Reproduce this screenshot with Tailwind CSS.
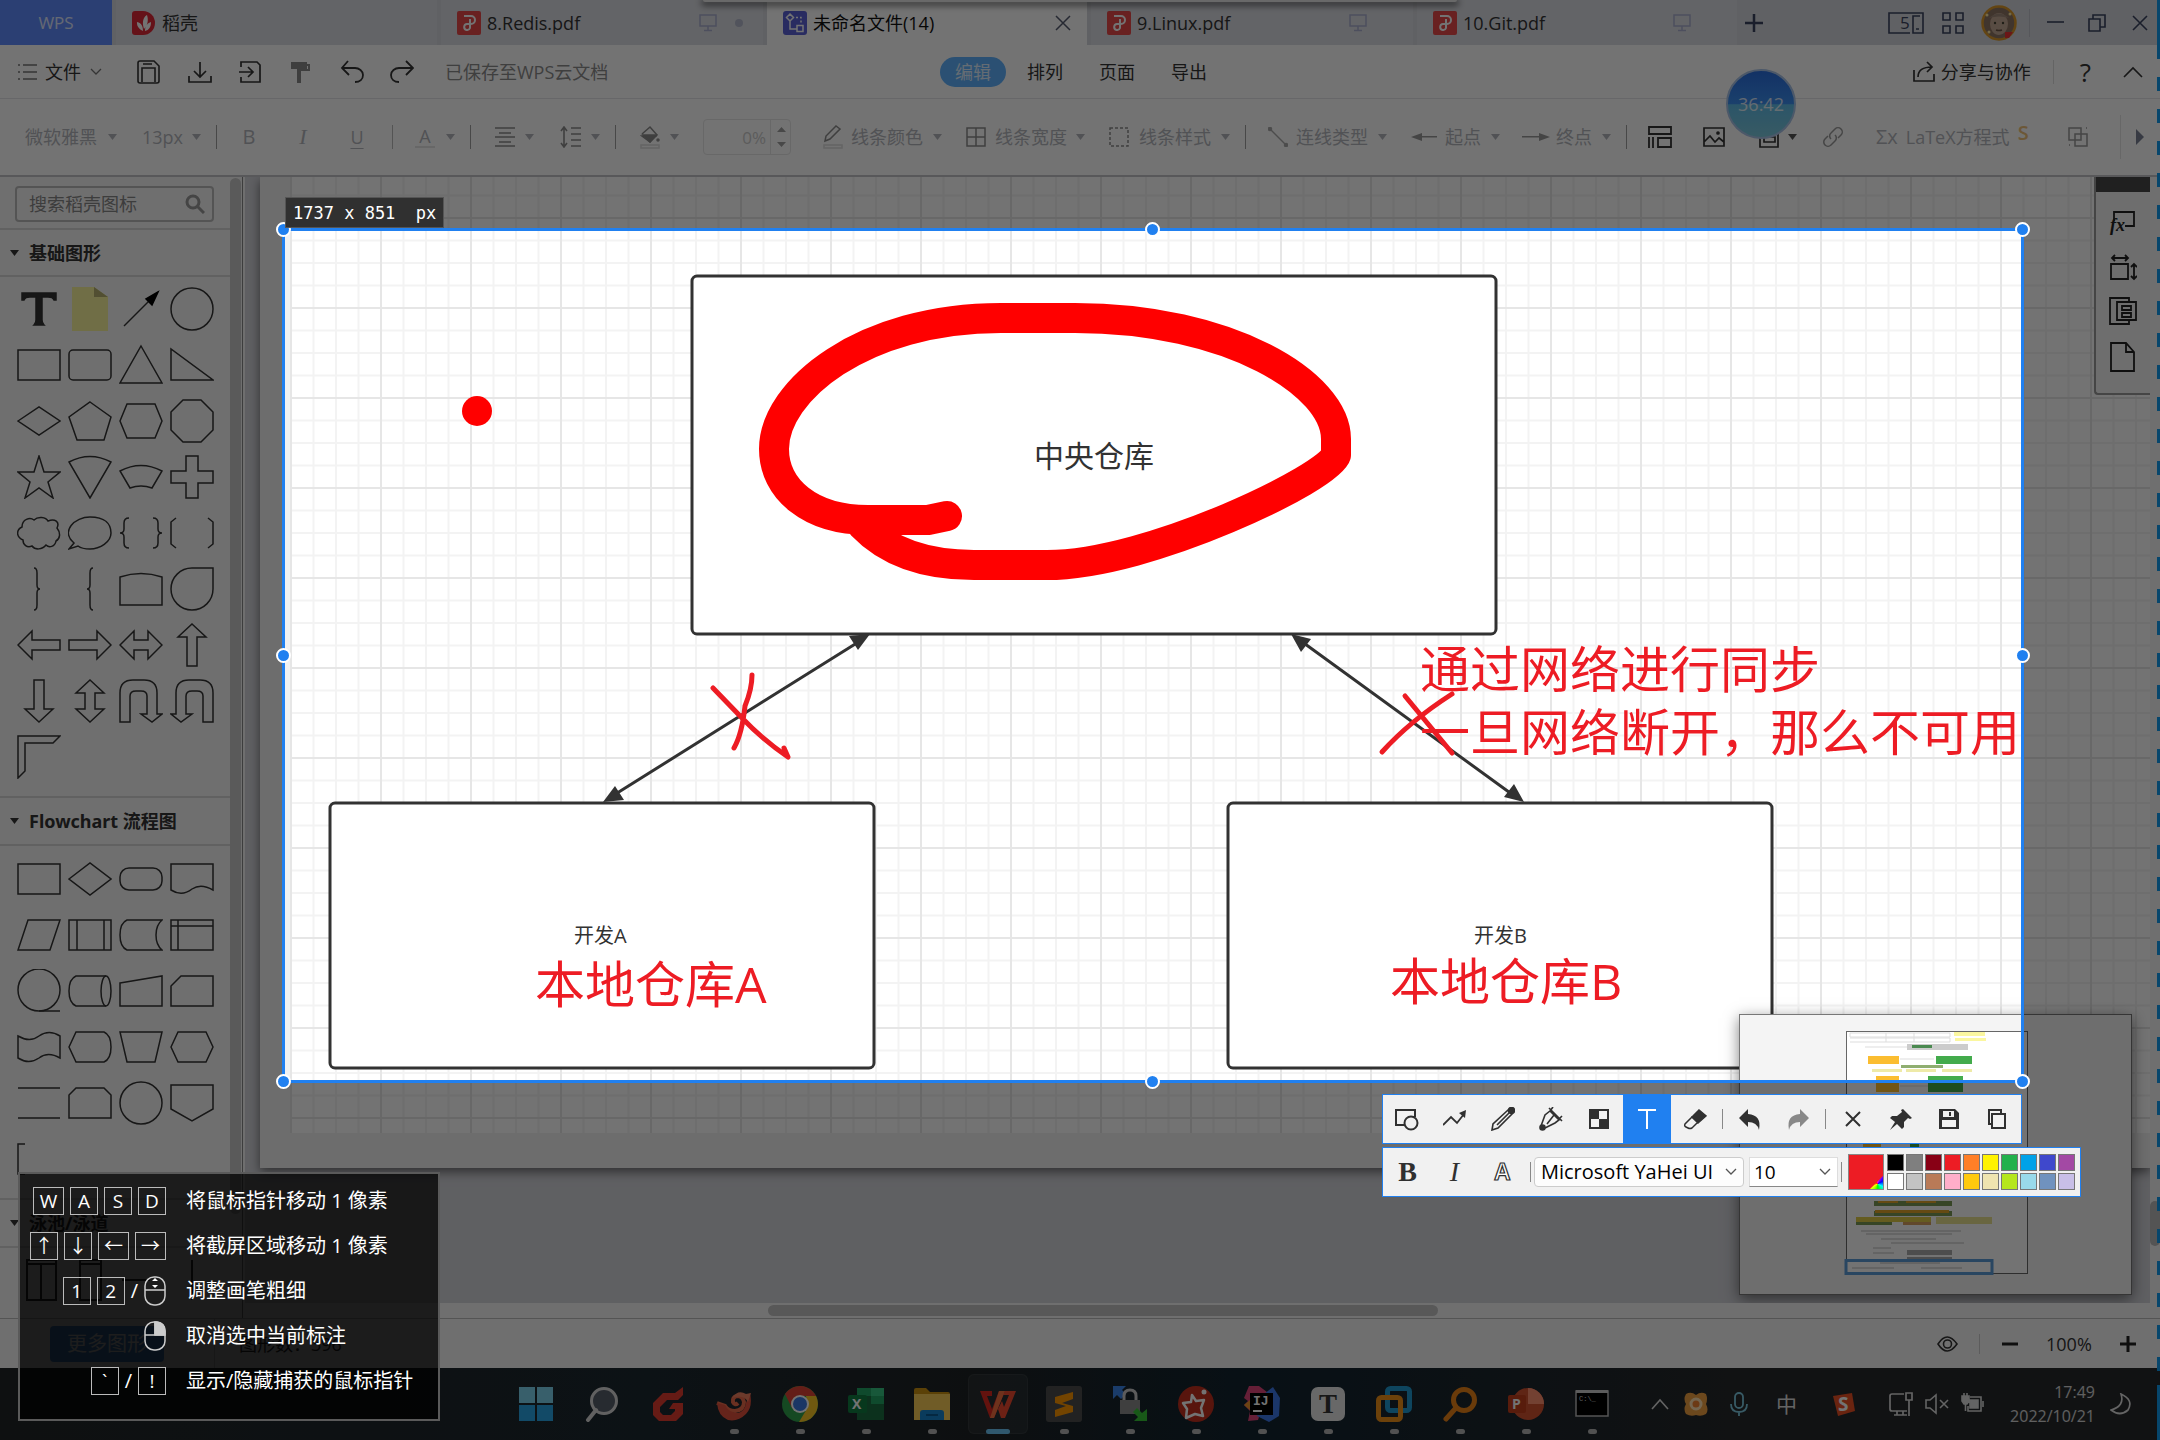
<!DOCTYPE html>
<html lang="zh-CN">
<head>
<meta charset="utf-8">
<meta name="viewport" content="width=device-width, initial-scale=1">
<title>未命名文件(14)</title>
<script src="https://cdn.jsdelivr.net/npm/@tailwindcss/browser@4"></script>
</head>
<body class="relative flex h-screen min-h-[900px] w-full flex-col overflow-hidden bg-white font-['Open_Sans','Noto_Sans_CJK_SC',sans-serif] text-[18px] leading-6 text-[#333]">

<!-- shared icons -->
<svg class="hidden" aria-hidden="true">
  <symbol id="caret" viewBox="0 0 9 6"><path d="M0 0h9L4.5 6z" fill="currentColor"/></symbol>
  <symbol id="pdf" viewBox="0 0 24 24"><rect width="24" height="24" rx="2" fill="#e84b4b"/><path d="M7 5h7a4 4 0 0 1 0 8h-4a3 3 0 1 0 3 4V8" fill="none" stroke="#fff" stroke-width="2"/></symbol>
  <symbol id="screen" viewBox="0 0 18 18"><path d="M1 1h16v11H1zM9 12v4M5 16.500h8" fill="none" stroke="#aab0d0" stroke-width="1.500"/></symbol>
  <symbol id="chev" viewBox="0 0 12 8"><path d="M1 1l5 5 5-5" fill="none" stroke="currentColor" stroke-width="1.300"/></symbol>
</svg>

<!-- tab strip -->
<header class="flex h-[45px] shrink-0 items-stretch bg-[#d6d7dd]">
  <button class="w-[112px] bg-[#5f8cff] text-center text-[17px] text-white/80">WPS</button>
  <nav class="flex gap-1 pl-1">
    <a href="#" class="flex w-[321px] items-center bg-[#dcdee4] pl-4">
      <svg class="mr-[6px] size-6" viewBox="0 0 24 24"><path d="M0 3a3 3 0 0 1 3-3h8a12 12 0 0 1 0 24H3a3 3 0 0 1-3-3z" fill="#e02838"/><path d="M11 20C4 17 5 11 5 11c5 1 6 5 6 9zM12 18C9 9 13 5 15 4c2 6 0 11-3 14zM13 20c0-6 3-8 6-9 0 5-2 8-6 9z" fill="#fff"/></svg>稻壳</a>
    <a href="#" class="flex w-[322px] items-center bg-[#dcdee4] pl-4">
      <svg class="mr-[6px] size-6"><use href="#pdf"/></svg>8.Redis.pdf
      <svg class="ml-auto mr-[18px] size-[18px]"><use href="#screen"/></svg><i class="mr-[20px] size-2 rounded-full bg-[#b4b8cc]"></i></a>
    <a href="#" class="flex w-[320px] items-center bg-white pl-4 text-[#111]">
      <svg class="mr-[6px] size-6" viewBox="0 0 24 24"><rect width="24" height="24" rx="3" fill="#5b62d8"/><g fill="none" stroke="#fff" stroke-width="1.500"><path d="M7 3l3.500 3.500L7 10 3.500 6.500zM7 10v8h7M14 14.500h6v6h-6z"/><path d="M13 6.500h5v7" stroke-dasharray="2 2"/></g></svg>未命名文件(14)
      <svg class="ml-auto mr-4 size-4" viewBox="0 0 16 16"><path d="M1 1l14 14M15 1L1 15" stroke="#555b70" stroke-width="1.500"/></svg></a>
    <a href="#" class="flex w-[322px] items-center bg-[#dcdee4] pl-4">
      <svg class="mr-[6px] size-6"><use href="#pdf"/></svg>9.Linux.pdf
      <svg class="ml-auto mr-[46px] size-[18px]"><use href="#screen"/></svg></a>
    <a href="#" class="flex w-[320px] items-center bg-[#dcdee4] pl-4">
      <svg class="mr-[6px] size-6"><use href="#pdf"/></svg>10.Git.pdf
      <svg class="ml-auto mr-[46px] size-[18px]"><use href="#screen"/></svg></a>
  </nav>
  <button class="w-9 pl-[7px]" aria-label="新建"><svg class="size-5" viewBox="0 0 20 20"><path d="M10 1v18M1 10h18" stroke="#3a4460" stroke-width="2.500"/></svg></button>
  <div class="ml-auto flex items-center pr-[12px] text-[#3a4460]">
    <svg class="h-[22px] w-9" viewBox="0 0 36 22" fill="none" stroke="currentColor" stroke-width="1.600"><path d="M22 21H1V1h34v20H25V4h7M31 17h-3"/><text x="12" y="17" font-size="17" fill="currentColor" stroke="none">5</text></svg>
    <svg class="ml-[18px] size-[22px]" viewBox="0 0 22 22" fill="none" stroke="currentColor" stroke-width="1.600"><path d="M1 1h7v7H1zM14 1h7v7h-7zM1 14h7v7H1zM14 14h7v7h-7z"/></svg>
    <svg class="ml-[17px] size-9" viewBox="0 0 36 36"><circle cx="18" cy="18" r="16.500" fill="#8f7564" stroke="#dc9a2c" stroke-width="2.500"/><ellipse cx="18" cy="19" rx="9" ry="11" fill="#c4a894"/><path d="M8 13q10-9 20 0-10-3-20 0" fill="#a08a7a"/><path d="M15 25q3 1 6 0" stroke="#6b5546" stroke-width="1.500" fill="none"/><circle cx="14" cy="18" r="1.200" fill="#443"/><circle cx="22" cy="18" r="1.200" fill="#443"/><g fill="#ffe9a0"><circle cx="6" cy="10" r="1.500"/><circle cx="8" cy="27" r="1.500"/><circle cx="29" cy="9" r="1.500"/></g><path d="M24 27h8l-4 6h-4z" fill="#e33"/></svg>
    <i class="ml-3 h-7 w-px bg-[#bfc1c9]"></i>
    <svg class="ml-[17px] size-[17px]" viewBox="0 0 17 17"><path d="M0 8h17" stroke="currentColor" stroke-width="1.600"/></svg>
    <svg class="ml-6 size-[18px]" viewBox="0 0 18 18" fill="none" stroke="currentColor" stroke-width="1.600"><path d="M1 5h11v12H1zM5 5V1h12v12h-5"/></svg>
    <svg class="ml-[26px] size-4" viewBox="0 0 16 16"><path d="M1 1l14 14M15 1L1 15" stroke="currentColor" stroke-width="1.600"/></svg>
  </div>
</header>

<!-- menu bar -->
<div class="flex h-[54px] shrink-0 items-center border-b border-[#e4e4e8] pl-[18px] pr-[17px]">
  <div class="flex flex-1 items-center">
    <button class="flex items-center gap-2"><svg class="h-4 w-[19px]" viewBox="0 0 19 16"><path d="M0 1h2M5 1h14M0 8h2M5 8h14M0 15h2M5 15h14" stroke="#777" stroke-width="1.500"/></svg>文件<svg class="h-2 w-[14px] text-[#777]"><use href="#chev"/></svg></button>
    <svg class="ml-[33px] size-6" viewBox="0 0 24 24" fill="none" stroke="currentColor" stroke-width="1.600"><path d="M2 3a2 2 0 0 1 2-2h14l5 5v15a2 2 0 0 1-2 2H4a2 2 0 0 1-2-2zM6 22V8h13v14M7 4h9"/></svg>
    <svg class="ml-[28px] size-6" viewBox="0 0 24 24" fill="none" stroke="currentColor" stroke-width="1.700"><path d="M12 2v14M6 11l6 6 6-6M1 16v6h22v-6"/></svg>
    <svg class="ml-[26px] size-6" viewBox="0 0 24 24" fill="none" stroke="currentColor" stroke-width="1.700"><path d="M3 7V2h16l3 3v17H3v-5M1 12h14M10 7l5 5-5 5"/></svg>
    <svg class="ml-[27px] size-6" viewBox="0 0 24 24" fill="#8a8a8a"><path d="M2 2h16v7H2zM18 4h3v7h-9v12H8V9h11V6h-1z"/></svg>
    <svg class="ml-[27px] size-6" viewBox="0 0 24 24" fill="none" stroke="currentColor" stroke-width="1.800"><path d="M8 1L2 8l7 7M2 8h13c4 0 8 3 8 7s-3 7-8 7"/></svg>
    <svg class="ml-[26px] size-6" viewBox="0 0 24 24" fill="none" stroke="currentColor" stroke-width="1.800"><path d="M16 1l7 7-7 7M22 8H9c-4 0-8 3-8 7s3 7 8 7"/></svg>
    <span class="ml-[31px] text-[#8c8c8c]">已保存至WPS云文档</span>
  </div>
  <nav class="flex items-center pr-[14px]">
    <button class="h-[30px] rounded-full bg-[#5fb2ff] px-[15px] text-white/80">编辑</button>
    <button class="ml-[21px]">排列</button><button class="ml-9">页面</button><button class="ml-9">导出</button>
  </nav>
  <div class="flex flex-1 items-center justify-end">
    <button class="flex items-center gap-[6px]"><svg class="size-[22px]" viewBox="0 0 22 22" fill="none" stroke="currentColor" stroke-width="1.700"><path d="M1 9v11h20v-7M5 16C5 9 10 6 19 6M14 1l5 5-5 5"/></svg>分享与协作</button>
    <i class="ml-[22px] h-6 w-px bg-[#ddd]"></i>
    <button class="ml-[26px] text-[26px]">?</button>
    <svg class="ml-[32px] h-3 w-5" viewBox="0 0 20 12"><path d="M1 11l9-9 9 9" fill="none" stroke="currentColor" stroke-width="1.600"/></svg>
  </div>
</div>

<!-- format bar -->
<div class="flex h-[78px] shrink-0 items-center border-b-2 border-[#c4c4c8] pl-[25px] text-[#b4b6bc]">
  <button class="flex items-center gap-[11px]">微软雅黑<svg class="h-[6px] w-[9px]"><use href="#caret"/></svg></button>
  <button class="ml-6 flex items-center gap-2"><span class="w-[43px]">13px</span><svg class="h-[6px] w-[9px]"><use href="#caret"/></svg></button>
  <i class="ml-[15px] h-6 w-px bg-[#a0a0a0]"></i>
  <button class="ml-6 w-4 text-[20px]">B</button>
  <button class="ml-10 w-3 font-['Liberation_Serif'] text-[22px] italic">I</button>
  <button class="ml-10 w-4 text-[18px] underline underline-offset-4">U</button>
  <i class="ml-[27px] h-6 w-px bg-[#bbb]"></i>
  <button class="ml-[22px] flex items-center gap-[11px]"><span class="w-5 border-b-2 border-[#e4e4e4] text-center leading-5">A</span><svg class="h-[6px] w-[9px]"><use href="#caret"/></svg></button>
  <i class="ml-[15px] h-6 w-px bg-[#a0a0a0]"></i>
  <button class="ml-6 flex items-center gap-[10px]"><svg class="size-5" viewBox="0 0 20 20" stroke="#8c8c8c" stroke-width="1.600"><path d="M0 1h20M4 6h12M0 10h20M4 15h12M0 19h20"/></svg><svg class="h-[6px] w-[9px]"><use href="#caret"/></svg></button>
  <button class="ml-[26px] flex items-center gap-[9px]"><svg class="size-[22px]" viewBox="0 0 22 22" stroke="#8c8c8c" stroke-width="1.600" fill="none"><path d="M4 1v20M1 5l3-4 3 4M1 17l3 4 3-4M11 2h10M11 8h10M11 14h10M11 20h10"/></svg><svg class="h-[6px] w-[9px]"><use href="#caret"/></svg></button>
  <i class="ml-[15px] h-6 w-px bg-[#a0a0a0]"></i>
  <button class="ml-6 flex items-center gap-[10px]"><svg class="h-6 w-5" viewBox="0 0 20 24" stroke="#8c8c8c" stroke-width="1.500" fill="none"><path d="M2 9l8-7 7 8-7 7-8-6h15"/><path d="M3 10h13l-6 7z" fill="#8c8c8c"/><circle cx="18" cy="15" r="1" /><path d="M1 20h18v3H1z" stroke="#ddd"/></svg><svg class="h-[6px] w-[9px]"><use href="#caret"/></svg></button>
  <label class="ml-6 flex h-9 w-[88px] items-center rounded-sm border border-[#e6e6e6]"><input aria-label="透明度" value="0%" class="h-full w-[67px] border-r border-[#e6e6e6] pr-1 text-right text-[17px] text-[#ccc]"><svg class="ml-[6px] h-6 w-[9px]" viewBox="0 0 9 24" fill="#a0a0a0"><path d="M0 7l4.500-5L9 7zM0 17h9l-4.500 5z"/></svg></label>
  <button class="ml-8 flex items-center gap-2"><svg class="h-6 w-5" viewBox="0 0 20 24" fill="none" stroke="#8c8c8c" stroke-width="1.500"><path d="M2 16l1-5L13 1l4 3L7 14z"/><path d="M1 20h18v3H1z" stroke="#ddd"/></svg>线条颜色<svg class="ml-[2px] h-[6px] w-[9px]"><use href="#caret"/></svg></button>
  <button class="ml-6 flex items-center gap-[9px]"><svg class="size-5" viewBox="0 0 20 20" fill="none" stroke="#8c8c8c" stroke-width="1.500"><path d="M1 1h18v18H1zM10 1v18M1 10h18"/></svg>线条宽度<svg class="h-[6px] w-[9px]"><use href="#caret"/></svg></button>
  <button class="ml-6 flex items-center gap-[10px]"><svg class="size-5" viewBox="0 0 20 20" fill="none" stroke="#8c8c8c" stroke-width="1.500" stroke-dasharray="3 2"><path d="M1 1h18v18H1z"/></svg>线条样式<svg class="h-[6px] w-[9px]"><use href="#caret"/></svg></button>
  <i class="ml-[15px] h-6 w-px bg-[#a0a0a0]"></i>
  <button class="ml-[22px] flex items-center gap-2"><svg class="size-5" viewBox="0 0 20 20" stroke="#aaa" stroke-width="1.500" fill="#aaa"><path d="M2 2l16 16"/><circle cx="2" cy="2" r="1.500"/><circle cx="18" cy="18" r="1.500"/></svg>连线类型<svg class="ml-[2px] h-[6px] w-[9px]"><use href="#caret"/></svg></button>
  <button class="ml-6 flex items-center gap-2"><svg class="h-2 w-[26px]" viewBox="0 0 26 8" fill="#999"><path d="M0 4l11-4v3h15v1.500H11V8z"/></svg>起点<svg class="ml-[2px] h-[6px] w-[9px]"><use href="#caret"/></svg></button>
  <button class="ml-[22px] flex items-center gap-[6px]"><svg class="h-2 w-7" viewBox="0 0 28 8" fill="#999"><path d="M28 4L17 0v3H0v1.500h17V8z"/></svg>终点<svg class="ml-1 h-[6px] w-[9px]"><use href="#caret"/></svg></button>
  <i class="ml-[15px] h-6 w-px bg-[#a0a0a0]"></i>
  <svg class="ml-[21px] h-[22px] w-6 text-[#333]" viewBox="0 0 24 22" fill="none" stroke="currentColor" stroke-width="1.800"><path d="M1 1h22v7H1zM1 11v11M5 11v11M10 12h13v9H10z"/></svg>
  <svg class="ml-[31px] size-[22px] text-[#333]" viewBox="0 0 22 22" fill="none" stroke="currentColor" stroke-width="1.700"><path d="M1 2h20v18H1zM1 16l6-6 5 6 4-4 5 4"/><circle cx="15" cy="7" r="1"/></svg>
  <svg class="ml-[33px] size-[22px] text-[#333]" viewBox="0 0 22 22" fill="none" stroke="currentColor" stroke-width="1.700"><path d="M2 4h18v17H2zM6 11h11v5H6z"/></svg>
  <svg class="ml-2 h-[6px] w-[9px] text-[#555]"><use href="#caret"/></svg>
  <svg class="ml-[25px] size-[22px]" viewBox="0 0 22 22" fill="none" stroke="#999" stroke-width="1.500"><path d="M9 13a4 4 0 0 1 0-6l4-4a4 4 0 0 1 6 6l-3 3M13 9a4 4 0 0 1 0 6l-4 4a4 4 0 0 1-6-6l3-3"/></svg>
  <button class="ml-8 flex items-center gap-2"><span class="text-[20px]">Σx</span>LaTeX方程式<b class="mb-2 text-[20px] font-semibold text-[#f0c27a]">S</b></button>
  <svg class="ml-auto size-5" viewBox="0 0 20 20" fill="none" stroke="#999" stroke-width="1.500"><path d="M1 1h12v12H1zM7 7h12v12H7zM18 1h1M1 18h1"/></svg>
  <button class="ml-8 mr-[16px] flex h-11 w-6 items-center justify-end border-l border-[#e4e4e4]" aria-label="更多"><svg class="h-4 w-2" viewBox="0 0 8 16"><path d="M0 0l8 8-8 8z" fill="#7a8294"/></svg></button>
</div>

<main class="flex min-h-0 flex-1">
  <!-- shape library -->
  <aside class="relative flex w-[245px] shrink-0 bg-[#f7f7f7]">
    <div class="w-[230px] overflow-hidden">
      <label class="mx-[15px] mt-[9px] flex h-9 w-[199px] items-center rounded-sm border-2 border-[#bbb]"><input aria-label="搜索稻壳图标" placeholder="搜索稻壳图标" class="w-40 pl-3 placeholder:text-[#888]"><svg class="ml-2 size-5" viewBox="0 0 20 20" fill="none" stroke="#999" stroke-width="3"><circle cx="8" cy="8" r="6"/><path d="M12 12l7 7"/></svg></label>
      <h2 class="mt-[6px] flex h-[49px] items-center gap-[9px] border-y-2 border-[#d8d8d8] pl-[9px] font-bold"><svg class="h-[6px] w-[11px]"><use href="#caret"/></svg>基础图形</h2>
      <div class="mt-[4px] grid h-[515px] auto-rows-[56px] grid-cols-[repeat(4,51px)] content-start justify-items-center pl-[13px] [&>svg]:mt-[6px] [&>svg]:size-11 [&>svg]:fill-none [&>svg]:stroke-[#333] [&>svg]:stroke-[1.500px]">
        <svg viewBox="-22 -22 44 44"><path d="M-17-16H17V-9H15Q14-12 9-12H3V11Q3 14 5 16H-5Q-3 14-3 11V-12H-9Q-14-12-15-9H-17z" fill="#333"/></svg>
        <svg viewBox="-22 -22 44 44"><path d="M-18-22H4L18-12V22H-18z" fill="#f8f49c" stroke="none"/><path d="M4-22L18-12H4z" fill="#b5b070" stroke="none"/></svg>
        <svg viewBox="-22 -22 44 44"><path d="M-17 17L8-8"/><path d="M17-17L5-10 11-4z" fill="#000" stroke="#000"/></svg>
        <svg viewBox="-22 -22 44 44"><circle r="21"/></svg>
        <svg viewBox="-22 -22 44 44"><path d="M-21-15H21V15H-21z"/></svg>
        <svg viewBox="-22 -22 44 44"><rect x="-21" y="-15" width="42" height="30" rx="4"/></svg>
        <svg viewBox="-22 -22 44 44"><path d="M0-19L21 18H-21z"/></svg>
        <svg viewBox="-22 -22 44 44"><path d="M-21-16V15H21z"/></svg>
        <svg viewBox="-22 -22 44 44"><path d="M-21 0L0-14 21 0 0 14z"/></svg>
        <svg viewBox="-22 -22 44 44"><path d="M0-19L21-4 14 19H-13L-21-4z"/></svg>
        <svg viewBox="-22 -22 44 44"><path d="M-21 0L-14-17H14L21 0 14 17H-14z"/></svg>
        <svg viewBox="-22 -22 44 44"><path d="M-21-9L-9-21H9L21-9V9L9 21H-9L-21 9z"/></svg>
        <svg viewBox="-22 -22 44 44"><path d="M0-21L5-5H21L9 5 14 21 0 11-14 21-9 5-21-5H-5z"/></svg>
        <svg viewBox="-22 -22 44 44"><path d="M-21-15Q0-26 21-15L0 21z"/></svg>
        <svg viewBox="-22 -22 44 44"><path d="M-21-6Q0-17 21-6L11 11Q0 7-11 11z"/></svg>
        <svg viewBox="-22 -22 44 44"><path d="M-6-21H6V-6H21V6H6V21H-6V6H-21V-6H-6z"/></svg>
        <svg viewBox="-22 -22 44 44"><path d="M-17-6C-17-14-9-16-5-13-1-17 7-16 9-12 16-15 21-11 18-5 22 0 21 6 17 8 16 14 10 15 7 12 3 17-4 17-7 13-12 15-16 12-16 7-23 4-23-3-17-6z"/></svg>
        <svg viewBox="-22 -22 44 44"><path d="M-16 10C-30-2-15-16 0-16S21-9 21 0 10 16 0 16Q-8 16-12 13L-21 16z"/></svg>
        <svg viewBox="-22 -22 44 44"><path d="M-12-15Q-17-15-17-10V-4Q-17 0-21 0-17 0-17 4V10Q-17 15-12 15M12-15Q17-15 17-10V-4Q17 0 21 0 17 0 17 4V10Q17 15 12 15"/></svg>
        <svg viewBox="-22 -22 44 44"><path d="M-16-15L-21-11V11L-16 15M16-15L21-11V11L16 15"/></svg>
        <svg viewBox="-22 -22 44 44"><path d="M-5-21Q-2-21-2-16V-4Q-2 0 1 0-2 0-2 4V16Q-2 21-5 21"/></svg>
        <svg viewBox="-22 -22 44 44"><path d="M3-21Q0-21 0-16V-4Q0 0-3 0 0 0 0 4V16Q0 21 3 21"/></svg>
        <svg viewBox="-22 -22 44 44"><path d="M-21 16V-12Q0-19 21-12V16z"/></svg>
        <svg viewBox="-22 -22 44 44"><path d="M0-21H21V0A21 21 0 1 1 0-21z"/></svg>
        <svg viewBox="-22 -22 44 44"><path d="M-21 0L-7-14V-5H21V5H-7V14z"/></svg>
        <svg viewBox="-22 -22 44 44"><path d="M21 0L7-14V-5H-21V5H7V14z"/></svg>
        <svg viewBox="-22 -22 44 44"><path d="M-21 0L-7-14V-5H7V-14L21 0 7 14V5H-7V14z"/></svg>
        <svg viewBox="-22 -22 44 44"><path d="M0-21L14-8H5V21H-5V-8H-14z"/></svg>
        <svg viewBox="-22 -22 44 44"><path d="M0 21L14 8H5V-21H-5V8H-14z"/></svg>
        <svg viewBox="-22 -22 44 44"><path d="M0-21L14-8H5V8H14L0 21-14 8H-5V-8H-14z"/></svg>
        <svg viewBox="-22 -22 44 44"><path d="M-21 21V-8Q-21-21-8-21H3Q16-21 16-8V13H21L11 21 0 13H6V-5Q6-10 0-10H-5Q-11-10-11-5V21z"/></svg>
        <svg viewBox="-22 -22 44 44"><path d="M21 21V-8Q21-21 8-21H-3Q-16-21-16-8V13H-21L-11 21 0 13H-6V-5Q-6-10 0-10H5Q11-10 11-5V21z"/></svg>
        <svg viewBox="-22 -22 44 44"><path d="M-21 21V-21H21L14-14H-14V14z"/></svg>
      </div>
      <h2 class="flex h-[50px] items-center gap-[9px] border-y-2 border-[#d8d8d8] pl-[9px] font-['Noto_Sans','Noto_Sans_CJK_SC'] text-[18px] font-bold"><svg class="h-[6px] w-[11px]"><use href="#caret"/></svg>Flowchart 流程图</h2>
      <div class="mt-[5px] grid h-[347px] auto-rows-[56px] grid-cols-[repeat(4,51px)] content-start justify-items-center pl-[13px] [&>svg]:mt-[6px] [&>svg]:size-11 [&>svg]:fill-none [&>svg]:stroke-[#333] [&>svg]:stroke-[1.500px]">
        <svg viewBox="-22 -22 44 44"><path d="M-21-15H21V15H-21z"/></svg>
        <svg viewBox="-22 -22 44 44"><path d="M-21 0L0-16 21 0 0 16z"/></svg>
        <svg viewBox="-22 -22 44 44"><rect x="-21" y="-11" width="42" height="22" rx="9"/></svg>
        <svg viewBox="-22 -22 44 44"><path d="M-21-15H21V11Q9 4 0 10-10 18-21 11z"/></svg>
        <svg viewBox="-22 -22 44 44"><path d="M-11-15H21L11 15H-21z"/></svg>
        <svg viewBox="-22 -22 44 44"><path d="M-21-15H21V15H-21zM-13-15V15M14-15V15"/></svg>
        <svg viewBox="-22 -22 44 44"><path d="M21-15H-14Q-21-12-21 0T-14 15H21Q15 10 15 0T21-15z"/></svg>
        <svg viewBox="-22 -22 44 44"><path d="M-21-15H21V15H-21zM-14-15V15M-21-9H21"/></svg>
        <svg viewBox="-22 -22 44 44"><path d="M21 20H0"/><circle r="21" cy="-1"/></svg>
        <svg viewBox="-22 -22 44 44"><path d="M16-15H-14Q-21-12-21 0T-14 15H16"/><ellipse cx="16" rx="5" ry="15"/></svg>
        <svg viewBox="-22 -22 44 44"><path d="M-21-8L21-15V15H-21z"/></svg>
        <svg viewBox="-22 -22 44 44"><path d="M-11-15H21V15H-21V-5z"/></svg>
        <svg viewBox="-22 -22 44 44"><path d="M-21-11Q-9-4 0-11 10-18 21-11V11Q9 4 0 11-10 18-21 11z"/></svg>
        <svg viewBox="-22 -22 44 44"><path d="M-21 0L-14-15H14Q21-12 21 0T14 15H-14z"/></svg>
        <svg viewBox="-22 -22 44 44"><path d="M-21-15H21L14 15H-14z"/></svg>
        <svg viewBox="-22 -22 44 44"><path d="M-21 0L-14-15H14L21 0 14 15H-14z"/></svg>
        <svg viewBox="-22 -22 44 44"><path d="M-21-15H21M-21 15H21"/></svg>
        <svg viewBox="-22 -22 44 44"><path d="M-21 15V-8L-14-15H14L21-8V15z"/></svg>
        <svg viewBox="-22 -22 44 44"><circle r="21"/></svg>
        <svg viewBox="-22 -22 44 44"><path d="M-21-18H21V6L0 18-21 6z"/></svg>
        <svg viewBox="-22 -22 44 44"><path d="M-14-15H-21V15H-14"/></svg>
      </div>
      <h2 class="flex h-[50px] items-center gap-[9px] border-y-2 border-[#d8d8d8] pl-[9px] font-bold"><svg class="h-[6px] w-[11px]"><use href="#caret"/></svg>泳池/泳道</h2>
      <svg class="mt-[10px] h-12 w-[220px]" viewBox="0 0 220 48" fill="none" stroke="#333" stroke-width="2"><path d="M27 2H56V42H27zM27 6H56M41 6V42M80 2H101V42H80zM80 6H101M122 22H150M192 2V42"/></svg>
    </div>
    <div class="mb-[104px] mt-px w-[11px] rounded-full bg-[#c8c8c8]"></div>
    <i class="ml-px h-full w-px bg-[#888]"></i>
  </aside>

  <!-- drawing area -->
  <div class="relative flex min-w-0 flex-1 flex-col bg-[#f7f7f7]">
    <div class="relative mr-[10px] min-h-0 flex-1 overflow-hidden bg-[#d3d4da]">
      <div class="ml-[15px] h-[991px] bg-[#f2f2f2] pb-[35px] pl-[30px] shadow-[0_4px_10px_rgba(0,0,0,0.5)]">
        <svg class="size-full bg-white">
          <defs><pattern id="grid" width="90" height="90" y="40" patternUnits="userSpaceOnUse"><path d="M23.500 0V90M46 0V90M68.500 0V90M0 23.500H90M0 46H90M0 68.500H90" stroke="#f3f3f3" stroke-width="2"/><path d="M1 0V90M0 1H90" stroke="#e6e6e6" stroke-width="2"/></pattern></defs>
          <rect width="100%" height="100%" fill="url(#grid)"/>
        </svg>
      </div>
      <!-- diagram and ink -->
      <svg class="absolute inset-0 size-full font-['Open_Sans','Noto_Sans_CJK_SC',sans-serif]">
        <g transform="translate(-245 -178)">
          <g fill="#fff" stroke="#323232" stroke-width="3">
            <rect x="692" y="277" width="804" height="358" rx="5"/>
            <rect x="330" y="804" width="544" height="265" rx="5"/>
            <rect x="1228" y="804" width="544" height="265" rx="5"/>
            <path d="M614 796L860 642M1301 642L1513 796" fill="none"/>
          </g>
          <g fill="#323232">
            <path d="M870 635L858 651 849 637zM603 803L615 787 624 801zM1291 635L1311 640 1301 653zM1524 803L1504 798 1514 785z"/>
            <text x="1034" y="468" font-size="30">中央仓库</text>
            <text x="574" y="944" font-size="20">开发A</text>
            <text x="1474" y="944" font-size="20">开发B</text>
          </g>
          <path d="M947 517L928 521H868C810 521 774 490 774 450C774 392 862 319 1001 319H1075C1230 319 1336 385 1336 440V456C1330 478 1150 566 1047 566H974C920 566 885 550 862 526" fill="none" stroke="#f00" stroke-width="30" stroke-linecap="round" stroke-linejoin="round"/>
          <circle cx="477" cy="412" r="15" fill="#f00"/>
          <g fill="none" stroke="#ed1c24" stroke-width="5" stroke-linecap="round" stroke-linejoin="round">
            <path d="M713 689L742 729 762 748 788 758 784 749" class="hidden"/>
            <path d="M713 689L742 719Q762 740 788 758L784 749M752 676Q752 690 745 707 742 735 734 749"/>
            <path d="M1382 753Q1410 722 1452 695M1405 697L1452 754"/>
          </g>
          <g fill="#ed1c24" font-size="50">
            <text x="1420" y="689">通过网络进行同步</text>
            <text x="1420" y="752">一旦网络断开，那么不可用</text>
            <text x="535" y="1004">本地仓库A</text>
            <text x="1390" y="1001">本地仓库B</text>
          </g>
        </g>
      </svg>
      <!-- property tabs -->
      <div class="absolute right-0 top-0 flex h-[218px] w-14 flex-col items-center rounded-bl border-b-2 border-l-2 border-[#999] bg-[#f3f3f3]">
        <i class="h-[15px] w-full bg-[#484848]"></i>
        <svg class="mt-[17px] size-7" viewBox="0 0 28 28" fill="none" stroke="#222" stroke-width="1.800"><path d="M5 12V3h20v14h-9"/><text x="1" y="22" font-size="18" font-style="italic" font-weight="bold" font-family="Liberation Serif" fill="#222" stroke="none">fx</text></svg>
        <svg class="mt-[16px] size-7" viewBox="0 0 28 28" fill="none" stroke="#222" stroke-width="1.800"><path d="M2 11h17v15H2zM3 5h16M6 2L3 5l3 3M16 2l3 3-3 3M25 11v15M22 14l3-3 3 3M22 23l3 3 3-3"/></svg>
        <svg class="mt-[15px] size-[30px]" viewBox="0 0 30 30" fill="none" stroke="#222" stroke-width="1.800"><path d="M21 5V2H2v26h19v-4M9 6h19v18H9zM14 10h9v4h-9zM14 17h9v4h-9z"/></svg>
        <svg class="mt-[16px] size-[30px]" viewBox="0 0 30 30" fill="none" stroke="#222" stroke-width="1.800"><path d="M3 1h15l8 9v19H3zM18 1v9h8"/></svg>
      </div>
      <!-- overview map -->
      <div class="absolute bottom-[8px] right-[18px] h-[281px] w-[393px] border border-[#777] bg-[#f4f4f4] pl-[104px] pt-4 shadow-[0_4px_14px_rgba(0,0,0,0.5)]">
        <svg class="h-[246px] w-[186px]" viewBox="-2 0 186 246">
          <rect x=".5" y=".5" width="181" height="242" fill="#fff" stroke="#666"/>
          <path d="M4 2H104V6H4zM4 7H104V11H4M40 2V11M68 2V11M19 16H61M54 28H88M54 50H82M54 55H82" stroke="#ddd" fill="none"/>
          <path d="M108 1h31v4h-31zM109 7h31v3h-31z" fill="#fbf7a0"/>
          <path d="M61 13h61v6h-61z" fill="#ccc"/><path d="M66 14h20v3h-20z" fill="#4b8a50"/>
          <path d="M22 25h31v8h-31zM30 45h23v16h-23zM17 112h18v4h-18z" fill="#fbbd30"/>
          <path d="M90 25h36v8h-36zM82 45h35v16h-35zM64 112h9v4h-9z" fill="#43ab4c"/>
          <path d="M55 34h42v3h-42z" fill="#8fae70"/>
          <path d="M26 38h30v3h-30zM60 38h30v3h-30zM96 38h30v3h-30z" fill="#eeeaa8"/>
          <path d="M28 170h78v5h-78zM28 180h78v5h-78zM10 191h36v3h-36z" fill="#7a9a55"/>
          <path d="M32 170h20v2h-20zM60 170h30v2h-30zM29 179h74v3h-74z" fill="#e0a52c"/>
          <path d="M10 186h75v5h-75z" fill="#e0cc48"/><path d="M57 191h28v3h-28z" fill="#d8a060"/>
          <path d="M90 186h56v7h-56z" fill="#e8e290"/>
          <path d="M15 200H115M20 203H106M35 208H90M45 212H118M27 217H45M27 222H48M34 232H94M6 237H48M75 237H116" stroke="#d4d4d4" stroke-width="1.500"/>
          <path d="M61 219h45v5h-45zM61 226h45v2h-45z" fill="#aaa"/>
          <path d="M0 229.500H146V242.500H0z" fill="none" stroke="#5c9bd8" stroke-width="3"/>
        </svg>
      </div>
    </div>
    <div class="h-[15px] shrink-0 pl-[523px] pt-[2px]"><div class="h-[11px] w-[670px] rounded-full bg-[#c3c3c3]"></div></div>
    <i class="absolute bottom-[72px] right-0 h-[45px] w-[10px] rounded-full bg-[#bbb]"></i>
  </div>
</main>

<!-- status bar -->
<footer class="flex h-[50px] shrink-0 items-center border-t border-[#bbb] bg-[#f7f7f7] pr-6">
  <button class="ml-[50px] h-9 w-[114px] rounded bg-[#4a90e2] text-[20px] text-white">更多图形</button>
  <i class="ml-[50px] h-full w-px bg-[#ccc]"></i><span class="ml-6">图形数：396</span>
  <svg class="ml-auto h-4 w-[21px]" viewBox="0 0 21 16" fill="none" stroke="#333" stroke-width="1.600"><path d="M1 8Q10-6 20 8 10 22 1 8z"/><circle cx="10.500" cy="8" r="4"/></svg>
  <i class="ml-[21px] h-5 w-px bg-[#ccc]"></i>
  <svg class="ml-[22px] size-4" viewBox="0 0 16 16"><path d="M0 8h16" stroke="#222" stroke-width="3"/></svg>
  <span class="ml-7 w-12 text-[18px]">100%</span>
  <svg class="ml-[26px] size-4" viewBox="0 0 16 16"><path d="M0 8h16M8 0v16" stroke="#222" stroke-width="3"/></svg>
</footer>

<!-- taskbar -->
<div class="flex h-[72px] shrink-0 items-center bg-[linear-gradient(90deg,#202526,#1c2830_30%,#1e2325_45%,#122430_58%,#26282b_80%,#26282b)] pl-[503px] text-white">
  <div class="flex [&>*]:relative [&>*]:flex [&>*]:h-[72px] [&>*]:w-[66px] [&>*]:items-center [&>*]:justify-center">
    <span><svg class="size-9" viewBox="0 0 36 36"><path d="M1 1h16v16H1zM19 1h16v16H19z" fill="#7cd2ee"/><path d="M1 19h16v16H1zM19 19h16v16H19z" fill="#28a4e4"/></svg></span>
    <span><svg class="size-9" viewBox="0 0 36 36"><circle cx="20" cy="15" r="12.500" fill="#58606c" stroke="#d8d8d8" stroke-width="3"/><path d="M12 24L4 34" stroke="#d8d8d8" stroke-width="4" stroke-linecap="round"/></svg></span>
    <span><svg class="size-9" viewBox="0 0 36 36"><path d="M33 1v8l-5 5H17l-7 7v5l3 3h8l4-4v-2h-6l4-6h10v11l-7 7H9l-6-6V17L13 7h12z" fill="#e23c30"/></svg></span>
    <span><svg class="size-9" viewBox="0 0 36 36"><path d="M1 17l8 3q3 5 10 5 9-1 9-9-1-6-7-6-5 1-4 6 2 4 5 1" fill="none" stroke="#ec6a4a" stroke-width="4"/><path d="M1 17l8 2q4 8 13 8 7-2 8-10 3-8 4-10 3 14-4 21-8 8-18 6Q2 30 1 17z" fill="#e0503c"/><path d="M16 12q6-9 14-4l5-1q-2 6-3 9-4-8-16-4z" fill="#f08060"/></svg><i class="absolute bottom-[6px] h-[5px] w-[9px] rounded-full bg-[#b4b4b4]"></i></span>
    <span><svg class="size-9" viewBox="0 0 36 36"><circle cx="18" cy="18" r="18" fill="#2fa24c"/><path d="M3 8A18 18 0 0 1 34 10H18l-8 12z" fill="#dd4436"/><path d="M34 10A18 18 0 0 1 17 36l9-15-2-11z" fill="#f6c324"/><circle cx="18" cy="18" r="9" fill="#fff"/><circle cx="18" cy="18" r="7" fill="#3b78e0"/></svg><i class="absolute bottom-[6px] h-[5px] w-[9px] rounded-full bg-[#b4b4b4]"></i></span>
    <span><svg class="size-9" viewBox="0 0 36 36"><path d="M9 2h27v32H9z" fill="#1c6e40"/><path d="M9 2h14v8H9zM23 10h13v8H23z" fill="#22a565"/><path d="M23 2h13v8H23z" fill="#35c481"/><rect y="9" width="19" height="18" rx="2" fill="#107c41"/><text x="4" y="23" font-size="14" font-weight="bold" fill="#fff">X</text></svg><i class="absolute bottom-[6px] h-[5px] w-[9px] rounded-full bg-[#b4b4b4]"></i></span>
    <span><svg class="size-9" viewBox="0 0 36 36"><path d="M0 4q0-2 2-2h10l4 4h18q2 0 2 2v26H0z" fill="#c99010"/><path d="M0 8h36v26H0z" fill="#f8cc58"/><path d="M6 34V27q0-3 3-3h18q3 0 3 3v7z" fill="#1783cc"/><path d="M12 29h12" stroke="#0c5a90" stroke-width="2"/></svg><i class="absolute bottom-[6px] h-[5px] w-[9px] rounded-full bg-[#b4b4b4]"></i></span>
    <span><i class="absolute inset-x-[3px] inset-y-[6px] rounded-md border border-white/5 bg-white/5"></i><svg class="relative size-9" viewBox="0 0 36 36"><path d="M0 5h12v5H7l5 13 7-18h6L14 32H10z" fill="#dc2820"/><path d="M25 5h11L25 32h-4l-3-9 4-8 2 6 5-12h-6z" fill="#f04a30"/><path d="M19 5h6L14 32H10z" fill="#f47040"/></svg><i class="absolute bottom-[6px] h-[5px] w-6 rounded-full bg-[#6cc4f4]"></i></span>
    <span><svg class="size-9" viewBox="0 0 36 36"><rect width="36" height="36" rx="3" fill="#4d4d4d"/><path d="M27 6v7l-11 4 11 3v6L9 31v-7l11-4-11-3v-6z" fill="#ff9800"/></svg><i class="absolute bottom-[6px] h-[5px] w-[9px] rounded-full bg-[#b4b4b4]"></i></span>
    <span><svg class="size-9" viewBox="0 0 36 36"><path d="M1 0h13l-4 4 4 4-5 5-4-4-4 4z" fill="#3a86ec"/><path d="M12 16v-6q0-6 6-6t6 6v6" fill="none" stroke="#ccc" stroke-width="3"/><path d="M8 14h20v14H8z" fill="#8c8c8c"/><path d="M35 35H22l4-4-5-5 4-4 5 5 5-4z" fill="#35c435"/></svg><i class="absolute bottom-[6px] h-[5px] w-[9px] rounded-full bg-[#b4b4b4]"></i></span>
    <span><svg class="size-9" viewBox="0 0 36 36"><circle cx="18" cy="18" r="18" fill="#c4301e"/><path d="M14 9l4 6 8-1-3 8 2 8-8-2-9 4 1-9-4-6 8-1z" fill="none" stroke="#fff" stroke-width="2.500" stroke-linejoin="round"/><circle cx="26" cy="6" r="2.500" fill="#fff"/></svg><i class="absolute bottom-[6px] h-[5px] w-[9px] rounded-full bg-[#b4b4b4]"></i></span>
    <span><svg class="size-9" viewBox="0 0 36 36"><path d="M5 0h10l8 6-9 28-10 1 2-10-6-6 4-4-4-3z" fill="#e0457b"/><path d="M20 8l9-7 7 11-1 18-10 6-12-6z" fill="#3c78e8"/><path d="M0 19l6-5v10z" fill="#f0962c"/><path d="M6 7h23v22H6z" fill="#000"/><text x="9" y="19" font-size="13" font-weight="bold" font-family="Liberation Mono" fill="#fff">IJ</text><path d="M9 25h9" stroke="#fff" stroke-width="2"/></svg><i class="absolute bottom-[6px] h-[5px] w-[9px] rounded-full bg-[#b4b4b4]"></i></span>
    <span><svg class="size-9 overflow-visible" viewBox="0 0 36 36"><rect x="1" y="1" width="34" height="34" rx="7" fill="#e6e6e6"/><text x="9" y="27" font-size="27" font-weight="bold" font-family="Liberation Serif" fill="#333">T</text></svg><i class="absolute bottom-[6px] h-[5px] w-[9px] rounded-full bg-[#b4b4b4]"></i></span>
    <span><svg class="size-9" viewBox="0 0 36 36" fill="none" stroke-width="5"><rect x="11.500" y="2.500" width="22" height="22" rx="3" stroke="#1f9ad0"/><rect x="2.500" y="11.500" width="22" height="22" rx="3" stroke="#f09018"/></svg><i class="absolute bottom-[6px] h-[5px] w-[9px] rounded-full bg-[#b4b4b4]"></i></span>
    <span><svg class="size-9" viewBox="0 0 36 36" fill="none" stroke="#ec8418" stroke-linecap="round"><circle cx="22" cy="14" r="10.500" stroke-width="5"/><path d="M13 23L4 33" stroke-width="5"/></svg><i class="absolute bottom-[6px] h-[5px] w-[9px] rounded-full bg-[#b4b4b4]"></i></span>
    <span><svg class="size-9" viewBox="0 0 36 36"><circle cx="20" cy="18" r="16" fill="#d35230"/><path d="M20 2a16 16 0 0 1 16 16H20z" fill="#ff9070"/><rect y="9" width="18" height="18" rx="2" fill="#c43e1c"/><text x="4" y="23" font-size="14" font-weight="bold" fill="#fff">P</text></svg><i class="absolute bottom-[6px] h-[5px] w-[9px] rounded-full bg-[#b4b4b4]"></i></span>
    <span><svg class="size-9" viewBox="0 0 36 36"><path d="M2 5h32v25H2z" fill="#000" stroke="#bbb" stroke-width="1.500"/><path d="M2 4h32v3H2z" fill="#ccc"/><text x="5" y="15" font-size="7" font-family="Liberation Mono" fill="#ccc">C:\_</text></svg><i class="absolute bottom-[6px] h-[5px] w-[9px] rounded-full bg-[#b4b4b4]"></i></span>
  </div>
  <div class="ml-auto flex items-center pr-[28px] text-[#ddd]">
    <svg class="h-3 w-[18px]" viewBox="0 0 18 12"><path d="M1 11l8-9 8 9" fill="none" stroke="currentColor" stroke-width="1.600"/></svg>
    <svg class="ml-[15px] size-6" viewBox="0 0 24 24"><path d="M2 2q5-3 10 1 5-4 10-1 2 5 0 10 3 6 0 10-5 3-10 1-5 2-10-1-3-5 0-10-3-5 0-10z" fill="#f0a040"/><circle cx="12" cy="12" r="5" fill="#f08030" stroke="#ffe0b0" stroke-width="3"/></svg>
    <svg class="ml-[22px] h-6 w-[18px] text-[#7cc8e0]" viewBox="0 0 18 24" fill="none" stroke="currentColor" stroke-width="1.800"><rect x="5" y="1" width="8" height="15" rx="4"/><path d="M1 12q0 8 8 8t8-8M9 20v4"/></svg>
    <span class="ml-[28px] w-[22px] text-[21px]">中</span>
    <svg class="ml-[34px] size-6 overflow-visible" viewBox="0 0 24 24"><path d="M1 4l19-3 3 18-17 5z" fill="#ec5024"/><text x="6" y="19" font-size="19" font-weight="bold" fill="#fff">S</text></svg>
    <svg class="ml-[33px] size-6" viewBox="0 0 24 24" fill="none" stroke="currentColor" stroke-width="1.700"><path d="M15 2H3q-2 0-2 2v13q0 2 2 2h15M8 19v4M14 19v4M5 23h13M17 1h6v7h-6zM20 8v16"/></svg>
    <svg class="ml-[12px] size-6" viewBox="0 0 24 24" fill="none" stroke="currentColor" stroke-width="1.600"><path d="M1 8h4l6-5v18l-6-5H1zM15 8l8 8M23 8l-8 8"/></svg>
    <svg class="ml-[12px] size-6" viewBox="0 0 24 24" fill="none" stroke="currentColor" stroke-width="1.600"><path d="M9 5h11v14H7v-5M22 9v6"/><path d="M9 8h8v8H9zM1 4h7v5l-2 3H3L1 9z" fill="currentColor"/><path d="M3 1v4M6 1v4M4.500 12v7"/></svg>
    <div class="ml-[22px] w-[88px] text-right text-[16px] leading-6 text-white/80">17:49<br>2022/10/21</div>
    <svg class="ml-[15px] size-[22px]" viewBox="0 0 22 22"><path d="M11 1q4 12-10 16 9 7 17 0 6-10-7-16z" fill="none" stroke="currentColor" stroke-width="1.700"/></svg>
  </div>
</div>

<!-- floating items of the desktop -->
<div class="absolute left-[703px] top-0 h-[2px] w-[754px] rounded-b bg-[#e8e8e8] shadow-[0_2px_6px_2px_rgba(0,0,0,0.5)]"></div>
<div class="absolute left-[1726px] top-[69px] flex size-[70px] items-center justify-center rounded-full border-2 border-[#a8c4e8] bg-[linear-gradient(180deg,#2a6ee0_0%,#3c8ff0_50%,#60bce8_51%,#7cc8dc_100%)] text-[18px] text-white/80">36:42</div>
<div class="absolute right-0 top-0 h-full w-[3px] bg-[repeating-linear-gradient(180deg,#109cf0_0px,#109cf0_14px,transparent_14px,transparent_32px)] bg-[position:0_13px]"></div>
<div class="absolute right-0 top-0 h-[58px] w-[3px] bg-[#109cf0]"></div>
<div class="absolute bottom-0 right-0 h-[55px] w-[3px] bg-[#109cf0]"></div>

<!-- capture area: its spread shadow dims the rest of the screen -->
<div class="absolute left-[282px] top-[228px] h-[855px] w-[1742px] border-[3px] border-[#2080f0] shadow-[0_0_0_3000px_rgba(0,0,0,0.55)]">
  <i class="absolute -left-[9px] -top-[9px] size-[15px] rounded-full border-2 border-white bg-[#2080f0]"></i>
  <i class="absolute -top-[9px] left-[860px] size-[15px] rounded-full border-2 border-white bg-[#2080f0]"></i>
  <i class="absolute -right-[9px] -top-[9px] size-[15px] rounded-full border-2 border-white bg-[#2080f0]"></i>
  <i class="absolute -left-[9px] top-[417px] size-[15px] rounded-full border-2 border-white bg-[#2080f0]"></i>
  <i class="absolute -right-[9px] top-[417px] size-[15px] rounded-full border-2 border-white bg-[#2080f0]"></i>
  <i class="absolute -bottom-[9px] -left-[9px] size-[15px] rounded-full border-2 border-white bg-[#2080f0]"></i>
  <i class="absolute -bottom-[9px] left-[860px] size-[15px] rounded-full border-2 border-white bg-[#2080f0]"></i>
  <i class="absolute -bottom-[9px] -right-[9px] size-[15px] rounded-full border-2 border-white bg-[#2080f0]"></i>
</div>
<div class="absolute left-[285px] top-[197px] flex h-[31px] w-[159px] items-center whitespace-pre border border-[#555] bg-[#303030] pl-[7px] font-['DejaVu_Sans_Mono'] text-[17px] text-white">1737 x 851  px</div>

<!-- capture tools -->
<div class="absolute left-[1382px] top-[1094px] flex h-[50px] items-center border border-[#2080f0] bg-[#f1f1f1] text-[#303030] [&>button]:flex [&>button]:h-12 [&>button]:w-12 [&>button]:items-center [&>button]:justify-center">
  <button aria-label="形状"><svg class="size-6" viewBox="0 0 24 24" fill="none" stroke="currentColor" stroke-width="2"><path d="M9 18H1V3h19v7"/><circle cx="16" cy="16" r="6.500"/></svg></button>
  <button aria-label="折线"><svg class="size-6" viewBox="0 0 24 24" fill="none" stroke="currentColor" stroke-width="1.800"><path d="M0 18l8-8 6 6 7-9"/><path d="M23 3l-1 8-6-5z" fill="currentColor" stroke="none"/></svg></button>
  <button aria-label="画笔"><svg class="size-6" viewBox="0 0 24 24" fill="none" stroke="currentColor" stroke-width="1.600"><path d="M1 23l1-6L17 3l4 4L7 21zM6 18L18 6"/><circle cx="20.500" cy="3.500" r="3" fill="currentColor"/></svg></button>
  <button aria-label="记号笔"><svg class="size-6" viewBox="0 0 24 24" fill="none" stroke="currentColor" stroke-width="1.600"><path d="M2 19L6 8l5-4 9 9-4 3-10 5M10 1l13 13M14 0l-3 4M23 9l-4 4M15 8L8 17"/><circle cx="3.500" cy="20.500" r="2.500" fill="currentColor"/></svg></button>
  <button aria-label="马赛克"><svg class="size-5" viewBox="0 0 20 20"><path d="M0 0h20v20H0z" fill="currentColor"/><path d="M10 2h8v8h-8zM2 10h8v8H2z" fill="#f1f1f1"/></svg></button>
  <button aria-label="文字" class="bg-[#2080f0] text-white"><svg class="size-5" viewBox="0 0 20 20"><path d="M1 1h18M10 1v19" stroke="#fff" stroke-width="2"/></svg></button>
  <button aria-label="橡皮"><svg class="size-6" viewBox="0 0 24 24" fill="none" stroke="currentColor" stroke-width="1.500"><path d="M9 10L2 17q-1 2 1 3l2 1q2 1 4 0l6-6z"/><path d="M9 10l7-7 7 6-8 7z" fill="currentColor"/></svg></button>
  <i class="mx-[3px] h-5 w-px bg-[#888]"></i>
  <button aria-label="撤销"><svg class="size-6" viewBox="0 0 24 24" fill="currentColor"><path d="M10 2v5q14 1 11 16-2-8-11-8v5L1 11z"/></svg></button>
  <button aria-label="重做" class="text-[#888]"><svg class="size-6" viewBox="0 0 24 24" fill="currentColor"><path d="M14 2v5Q0 8 3 23q2-8 11-8v5l9-9z"/></svg></button>
  <i class="mx-[3px] h-5 w-px bg-[#888]"></i>
  <button aria-label="关闭"><svg class="size-4" viewBox="0 0 16 16"><path d="M1 1l14 14M15 1L1 15" stroke="currentColor" stroke-width="2"/></svg></button>
  <button aria-label="贴图"><svg class="size-6" viewBox="0 0 24 24" fill="currentColor"><path d="M14 2l9 9-2 1-2-1-4 4v5l-2 2-5-5-7 6 5-8-5-4 2-2h5l5-4-1-2z"/></svg></button>
  <button aria-label="保存"><svg class="size-5" viewBox="0 0 20 20" fill="currentColor" fill-rule="evenodd"><path d="M0 0h16l4 4v16H0zM4 2v6h11V2zM3 11v7h14v-7zM10 3h2v4h-2z"/></svg></button>
  <button aria-label="复制"><svg class="size-5" viewBox="0 0 20 20" fill="none" stroke="currentColor" stroke-width="2"><path d="M5 5h13v14H5zM5 15H2V1h12v4"/></svg></button>
</div>
<div class="absolute left-[1382px] top-[1147px] flex h-[50px] items-center border border-[#2080f0] bg-[#f1f1f1] pr-[5px] text-[#303030] [&>button]:w-[47px] [&>button]:text-center">
  <button class="ml-px font-['Liberation_Serif'] text-[28px] font-bold">B</button>
  <button class="font-['Liberation_Serif'] text-[28px] italic">I</button>
  <button aria-label="描边"><svg class="mx-auto size-6 overflow-visible" viewBox="0 0 24 24"><text x="4" y="20" font-size="23" font-weight="bold" font-family="Liberation Sans" fill="#fff" stroke="#303030" stroke-width="1.200">A</text></svg></button>
  <i class="ml-[5px] mr-[3px] h-5 w-px bg-[#888]"></i>
  <div class="relative"><select aria-label="字体" class="h-[30px] w-[210px] appearance-none rounded-sm border border-[#ccc] bg-[#fdfdfd] pl-[6px] font-['Open_Sans'] text-[20px] leading-6 text-black"><option>Microsoft YaHei UI</option></select><svg class="absolute right-[7px] top-[11px] h-2 w-3 text-[#555]"><use href="#chev"/></svg></div>
  <div class="relative ml-[5px]"><select aria-label="字号" class="h-[30px] w-[89px] appearance-none border border-[#ddd] border-b-[#888] bg-white pl-1 font-['Open_Sans'] text-[19px] leading-6 text-black"><option>10</option></select><svg class="absolute right-[7px] top-[11px] h-2 w-3 text-[#555]"><use href="#chev"/></svg></div>
  <i class="ml-[3px] mr-[6px] h-5 w-px bg-[#888]"></i>
  <div class="relative size-9 border border-[#888] bg-[#ed1c24]"><i class="absolute bottom-0 right-0 size-[13px] bg-[conic-gradient(from_0deg_at_60%_60%,#f0f,#00f,#0ff,#0f0,#ff0,#f00,#f0f)] [clip-path:polygon(100%_0,100%_100%,0_100%)]"></i></div>
  <div class="ml-[3px] grid grid-cols-10 gap-[2px] [&>i]:size-[17px] [&>i]:border [&>i]:border-[#777]">
    <i class="bg-black"></i><i class="bg-[#7f7f7f]"></i><i class="bg-[#880015]"></i><i class="bg-[#ed1c24]"></i><i class="bg-[#ff7f27]"></i><i class="bg-[#fff200]"></i><i class="bg-[#22b14c]"></i><i class="bg-[#00a2e8]"></i><i class="bg-[#3f48cc]"></i><i class="bg-[#a349a4]"></i>
    <i class="bg-white"></i><i class="bg-[#c3c3c3]"></i><i class="bg-[#b97a57]"></i><i class="bg-[#ffaec9]"></i><i class="bg-[#ffc90e]"></i><i class="bg-[#efe4b0]"></i><i class="bg-[#b5e61d]"></i><i class="bg-[#99d9ea]"></i><i class="bg-[#7092be]"></i><i class="bg-[#c8bfe7]"></i>
  </div>
</div>

<!-- keyboard hints -->
<section class="absolute bottom-[19px] left-[18px] grid h-[249px] w-[422px] grid-cols-[146px_auto] content-start gap-x-5 border-2 border-[#5a5a5a] bg-black/75 pt-[4px] text-[20px] text-white [&>div]:flex [&>div]:h-[45px] [&>div]:items-center [&>div]:justify-end [&>div]:gap-[6px] [&>p]:leading-[45px] [&_kbd]:flex [&_kbd]:h-7 [&_kbd]:min-w-7 [&_kbd]:items-center [&_kbd]:justify-center [&_kbd]:border [&_kbd]:border-[#bbb] [&_kbd]:font-['Open_Sans','Noto_Sans_CJK_SC'] [&_kbd]:text-[19px]">
  <div><kbd class="w-[31px]">W</kbd><kbd>A</kbd><kbd>S</kbd><kbd>D</kbd></div><p>将鼠标指针移动 1 像素</p>
  <div><kbd>↑</kbd><kbd>↓</kbd><kbd class="w-[31px]">←</kbd><kbd class="w-[31px]">→</kbd></div><p>将截屏区域移动 1 像素</p>
  <div><kbd>1</kbd><kbd>2</kbd>/<svg class="h-[30px] w-[22px]" viewBox="0 0 22 30" fill="none" stroke="#ccc" stroke-width="1.500"><rect x="1" y="1" width="20" height="28" rx="9"/><path d="M1 14h20"/><path d="M8 5l3-3 3 3zM8 9h6l-3 3z" fill="#fff" stroke="none"/></svg></div><p>调整画笔粗细</p>
  <div><svg class="h-[30px] w-[22px]" viewBox="0 0 22 30" fill="none" stroke="#ccc" stroke-width="1.500"><rect x="1" y="1" width="20" height="28" rx="9"/><path d="M11 1v13M1 14h20"/><path d="M11 1h2q8 1 8 9v4H11z" fill="#ccc"/></svg></div><p>取消选中当前标注</p>
  <div><kbd>`</kbd>/<kbd>!</kbd></div><p>显示/隐藏捕获的鼠标指针</p>
</section>
</body>
</html>
